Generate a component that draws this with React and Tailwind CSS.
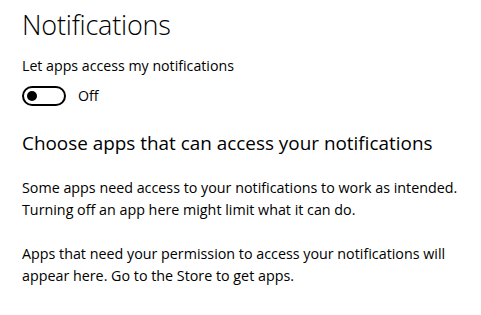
export default function App() {
  return (
    <div
      className="w-[481px] h-[315px] bg-white text-black overflow-hidden pl-[22px]"
      style={{ fontFamily: '"Open Sans", "Noto Sans", sans-serif' }}
    >
      <h1 className="text-[27px] font-light leading-[34px] pt-[8px] tracking-[-0.2px]">Notifications</h1>
      <p className="text-[14.2px] leading-[20px] mt-[14px]">Let apps access my notifications</p>
      <div className="flex items-center gap-[12px] mt-[9px]">
        <div className="w-[44px] h-[20px] rounded-full border-2 border-black flex items-center px-[3px]">
          <div className="w-[10px] h-[10px] rounded-full bg-black" />
        </div>
        <span className="text-[14.2px]">Off</span>
      </div>
      <h2 className="text-[18.9px] leading-[26px] mt-[24px]">Choose apps that can access your notifications</h2>
      <p className="text-[14.3px] leading-[22px] mt-[21px]">
        Some apps need access to your notifications to work as intended.
        <br />
        Turning off an app here might limit what it can do.
      </p>
      <p className="text-[14.3px] leading-[22px] mt-[22px]">
        Apps that need your permission to access your notifications will
        <br />
        appear here. Go to the Store to get apps.
      </p>
    </div>
  );
}
